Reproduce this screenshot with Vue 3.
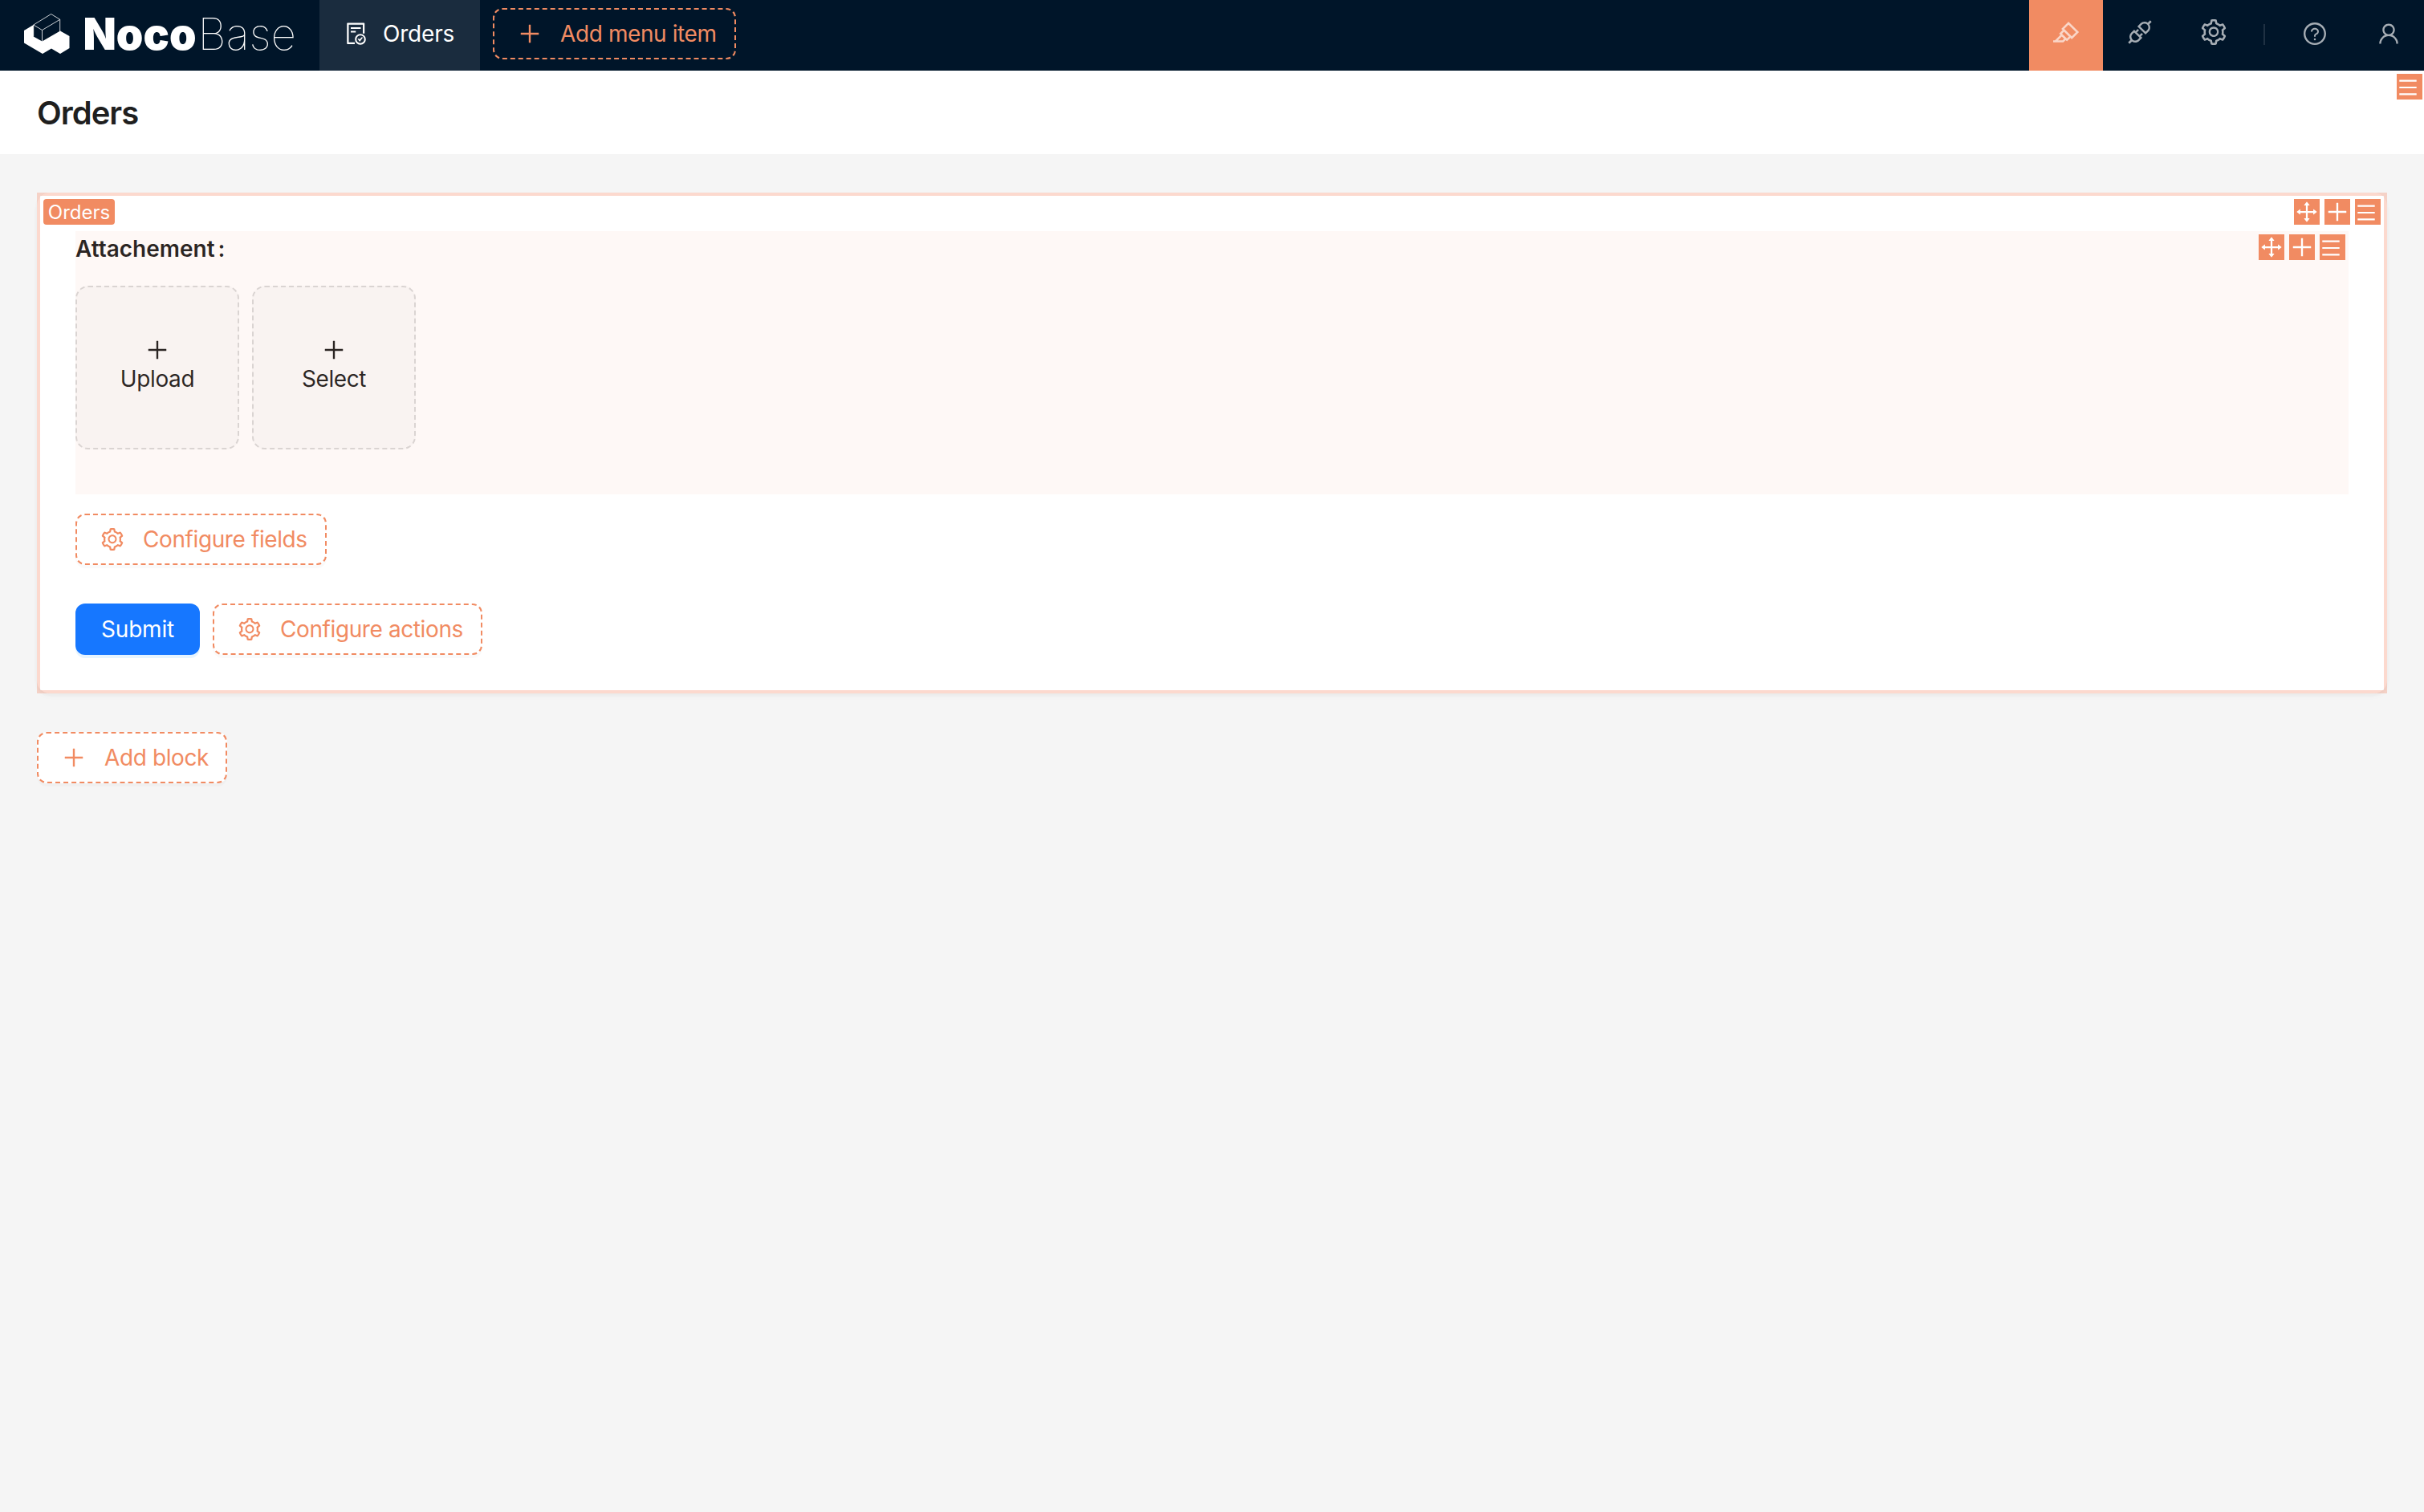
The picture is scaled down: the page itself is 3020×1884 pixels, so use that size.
<script setup>
import { h } from 'vue';

// icon paths, all drawn on the 64 64 896 896 grid
const paths = {
    plus: 'M482 152h60q8 0 8 8v704q0 8-8 8h-60q-8 0-8-8V160q0-8 8-8ZM160 474h704q8 0 8 8v60q0 8-8 8H160q-8 0-8-8v-60q0-8 8-8Z',
    menu: 'M904 160H120c-4.4 0-8 3.6-8 8v64c0 4.4 3.6 8 8 8h784c4.4 0 8-3.6 8-8v-64c0-4.4-3.6-8-8-8zm0 624H120c-4.4 0-8 3.6-8 8v64c0 4.4 3.6 8 8 8h784c4.4 0 8-3.6 8-8v-64c0-4.4-3.6-8-8-8zm0-312H120c-4.4 0-8 3.6-8 8v64c0 4.4 3.6 8 8 8h784c4.4 0 8-3.6 8-8v-64c0-4.4-3.6-8-8-8z',
    drag: 'M909.3 506.3L781.7 405.6a7.23 7.23 0 00-11.7 5.7V476H548V254h64.8c6 0 9.4-7 5.7-11.7L517.7 114.7a7.14 7.14 0 00-11.3 0L405.6 242.3a7.23 7.23 0 005.7 11.7H476v222H254v-64.8c0-6-7-9.4-11.7-5.7L114.7 506.3a7.14 7.14 0 000 11.3l127.5 100.8c4.7 3.7 11.7.4 11.7-5.7V548h222v222h-64.8c-6 0-9.4 7-5.7 11.7l100.8 127.5c2.9 3.7 8.5 3.7 11.3 0l100.8-127.5c3.7-4.7.4-11.7-5.7-11.7H548V548h222v64.8c0 6 7 9.4 11.7 5.7l127.5-100.8a7.3 7.3 0 00.1-11.4z',
    setting: 'M924.8 625.7l-65.5-56c3.1-19 4.7-38.4 4.7-57.8s-1.6-38.8-4.7-57.8l65.5-56a32.03 32.03 0 009.3-35.2l-.9-2.6a443.74 443.74 0 00-79.7-137.9l-1.8-2.1a32.12 32.12 0 00-35.1-9.5l-81.3 28.9c-30-24.6-63.5-44-99.7-57.6l-15.7-85a32.05 32.05 0 00-25.8-25.7l-2.7-.5c-52.1-9.4-106.9-9.4-159 0l-2.7.5a32.05 32.05 0 00-25.8 25.7l-15.8 85.4a351.86 351.86 0 00-99 57.4l-81.9-29.1a32 32 0 00-35.1 9.5l-1.8 2.1a446.02 446.02 0 00-79.7 137.9l-.9 2.6c-4.5 12.5-.8 26.5 9.3 35.2l66.3 56.6c-3.1 18.8-4.6 38-4.6 57.1 0 19.2 1.5 38.4 4.6 57.1L99 625.5a32.03 32.03 0 00-9.3 35.2l.9 2.6c18.1 50.4 44.9 96.9 79.7 137.9l1.8 2.1a32.12 32.12 0 0035.1 9.5l81.9-29.1c29.8 24.5 63.1 43.9 99 57.4l15.8 85.4a32.05 32.05 0 0025.8 25.7l2.7.5a449.4 449.4 0 00159 0l2.7-.5a32.05 32.05 0 0025.8-25.7l15.7-85a350 350 0 0099.7-57.6l81.3 28.9a32 32 0 0035.1-9.5l1.8-2.1c34.8-41.1 61.6-87.5 79.7-137.9l.9-2.6c4.5-12.3.8-26.3-9.3-35zM788.3 465.9c2.5 15.1 3.8 30.6 3.8 46.1s-1.3 31-3.8 46.1l-6.6 40.1 74.7 63.9a370.03 370.03 0 01-42.6 73.6L721 702.8l-31.4 25.8c-23.9 19.6-50.5 35-79.3 45.8l-38.1 14.3-17.9 97a377.5 377.5 0 01-85 0l-17.9-97.2-37.8-14.5c-28.5-10.8-55-26.2-78.7-45.7l-31.4-25.9-93.4 33.2c-17-22.9-31.2-47.6-42.6-73.6l75.5-64.5-6.5-40c-2.4-14.9-3.7-30.3-3.7-45.5 0-15.3 1.2-30.6 3.7-45.5l6.5-40-75.5-64.5c11.3-26.1 25.6-50.7 42.6-73.6l93.4 33.2 31.4-25.9c23.7-19.5 50.2-34.9 78.7-45.7l37.9-14.3 17.9-97.2c28.1-3.2 56.8-3.2 85 0l17.9 97 38.1 14.3c28.7 10.8 55.4 26.2 79.3 45.8l31.4 25.8 92.8-32.9c17 22.9 31.2 47.6 42.6 73.6L781.8 426l6.5 39.9zM512 326c-97.2 0-176 78.8-176 176s78.8 176 176 176 176-78.8 176-176-78.8-176-176-176zm79.2 255.2A111.6 111.6 0 01512 614c-29.9 0-58-11.7-79.2-32.8A111.6 111.6 0 01400 502c0-29.9 11.7-58 32.8-79.2C454 401.6 482.1 390 512 390c29.9 0 58 11.6 79.2 32.8A111.6 111.6 0 01624 502c0 29.9-11.7 58-32.8 79.2z',
    question: 'M512 64C264.600 64 64 264.600 64 512s200.600 448 448 448 448-200.600 448-448S759.400 64 512 64zm0 820c-205.400 0-372-166.600-372-372s166.600-372 372-372 372 166.600 372 372-166.600 372-372 372zM623.600 316.700C593.600 290.400 554 276 512 276s-81.600 14.500-111.600 40.700C369.200 344 352 380.700 352 420v7.600c0 4.400 3.600 8 8 8h48c4.400 0 8-3.600 8-8V420c0-44.100 43.100-80 96-80s96 35.900 96 80c0 31.100-22 59.600-56.100 72.700-21.200 8.100-39.200 22.300-52.100 40.900-13.100 19-19.900 41.800-19.900 64.900V620c0 4.400 3.600 8 8 8h48c4.400 0 8-3.600 8-8v-22.700a48.300 48.300 0 0130.900-44.800c59-22.700 97.100-74.700 97.100-132.500.1-39.300-17.100-76-48.300-103.300zM472 732a40 40 0 1080 0 40 40 0 10-80 0z',
    user: 'M858.5 763.6a374 374 0 00-80.6-119.5 375.63 375.63 0 00-119.5-80.6c-.4-.2-.8-.3-1.2-.5C719.5 518 760 444.7 760 362c0-137-111-248-248-248S264 225 264 362c0 82.7 40.5 156 102.8 201.1-.4.2-.8.3-1.2.5-44.8 18.9-85 46-119.5 80.6a375.63 375.63 0 00-80.6 119.5A371.7 371.7 0 00136 901.8a8 8 0 008 8.2h60c4.4 0 7.9-3.5 8-7.8 2-77.2 33-149.5 87.8-204.3 56.7-56.7 132-87.9 212.2-87.9s155.5 31.2 212.2 87.9C779 752.7 810 825 812 902.2c.1 4.4 3.6 7.8 8 7.8h60a8 8 0 008-8.2c-1-47.8-10.9-94.3-29.5-138.2zM512 534c-45.9 0-89.1-17.9-121.6-50.4S340 407.9 340 362c0-45.9 17.9-89.1 50.4-121.6S466.1 190 512 190s89.1 17.9 121.6 50.4S684 316.1 684 362c0 45.9-17.9 89.1-50.4 121.6S557.9 534 512 534z',
    highlight: 'M957.6 507.4L603.2 158.2a7.9 7.9 0 00-11.2 0L353.3 393.4a8.03 8.03 0 00-.1 11.3l.1.1 40 39.4-117.2 115.3a8.03 8.03 0 00-.1 11.3l.1.1 39.5 38.9-189.1 187H72.1c-4.4 0-8.1 3.6-8.1 8V860c0 4.4 3.6 8 8 8h344.9c2.1 0 4.1-.8 5.6-2.3l76.1-75.6 40.4 39.8a7.9 7.9 0 0011.2 0l117.1-115.6 40.1 39.5a7.9 7.9 0 0011.2 0l238.7-235.2c3.4-3 3.4-8 .3-11.2zM389.8 796.2H229.6l134.4-133 80.1 78.9-54.3 54.1zm154.8-62.1L373.2 565.2l68.6-67.6 171.4 168.9-68.6 67.6zM713.1 658L450.3 399.1 597.6 254l262.8 259-147.3 145z',
    api: 'M917.7 148.8l-42.4-42.4c-1.6-1.6-3.6-2.3-5.7-2.3s-4.1.8-5.7 2.3l-76.1 76.1a199.27 199.27 0 00-112.1-34.3c-51.2 0-102.4 19.5-141.5 58.6L432.3 308.7a8.03 8.03 0 000 11.3L704 591.7c1.6 1.6 3.6 2.3 5.7 2.3 2 0 4.1-.8 5.7-2.3l101.9-101.9c68.9-69 77-175.7 24.3-253.5l76.1-76.1c3.1-3.2 3.1-8.3 0-11.4zM769.1 441.7l-59.4 59.4-186.8-186.8 59.4-59.4c24.9-24.9 58.1-38.7 93.4-38.7 35.3 0 68.4 13.7 93.4 38.7 24.9 24.9 38.7 58.1 38.7 93.4 0 35.3-13.8 68.4-38.7 93.4zm-190.2 105a8.03 8.03 0 00-11.3 0L501 613.3 410.7 523l66.7-66.7c3.1-3.1 3.1-8.2 0-11.3L441 408.6a8.03 8.03 0 00-11.3 0L363 475.3l-43-43a7.85 7.85 0 00-5.7-2.3c-2 0-4.1.8-5.7 2.3L206.8 534.2c-68.9 69-77 175.7-24.3 253.5l-76.1 76.1a8.03 8.03 0 000 11.3l42.4 42.4c1.6 1.6 3.6 2.3 5.7 2.3s4.1-.8 5.7-2.3l76.1-76.1c33.7 22.9 72.9 34.3 112.1 34.3 51.2 0 102.4-19.5 141.5-58.6l101.9-101.9c3.1-3.1 3.1-8.2 0-11.3l-43-43 66.7-66.7c3.1-3.1 3.1-8.2 0-11.3l-36.6-36.2zM441.7 769.1a131.32 131.32 0 01-93.4 38.7c-35.3 0-68.4-13.7-93.4-38.7a131.32 131.32 0 01-38.7-93.4c0-35.3 13.7-68.4 38.7-93.4l59.4-59.4 186.8 186.8-59.4 59.4z',
    fileDone: 'M688 312v-48c0-4.4-3.6-8-8-8H296c-4.4 0-8 3.6-8 8v48c0 4.4 3.6 8 8 8h384c4.4 0 8-3.6 8-8zm-392 88c-4.4 0-8 3.6-8 8v48c0 4.4 3.6 8 8 8h184c4.4 0 8-3.6 8-8v-48c0-4.4-3.6-8-8-8H296zm376 116c-119.3 0-216 96.7-216 216s96.7 216 216 216 216-96.7 216-216-96.7-216-216-216zm107.5 323.5C750.8 868.2 712.6 884 672 884s-78.8-15.8-107.5-44.5C535.8 810.8 520 772.6 520 732s15.8-78.8 44.5-107.5C593.2 595.8 631.4 580 672 580s78.8 15.8 107.5 44.5C808.2 653.2 824 691.4 824 732s-15.8 78.8-44.5 107.5zM761 656h-44.3c-2.6 0-5 1.2-6.5 3.3l-63.5 87.8-23.1-31.9a7.92 7.92 0 00-6.5-3.3H573c-6.500 0-10.300 7.400-6.500 12.700l73.800 102.100c3.200 4.400 9.700 4.400 12.900 0l114.200-158c3.900-5.300.1-12.700-6.400-12.700zM440 852H208V148h560v344c0 4.400 3.600 8 8 8h56c4.400 0 8-3.600 8-8V108c0-17.700-14.300-32-32-32H168c-17.700 0-32 14.300-32 32v784c0 17.700 14.300 32 32 32h272c4.400 0 8-3.600 8-8v-56c0-4.400-3.600-8-8-8z',
};

const Icon = (props) =>
    h('svg', { viewBox: '64 64 896 896', fill: 'currentColor', 'aria-hidden': 'true' }, [
        h('path', { d: paths[props.name] }),
    ]);
Icon.props = ['name'];

const tools = ['drag', 'plus', 'menu'];
const uploads = ['Upload', 'Select'];
</script>

<template>
    <div class="page">
        <header class="header">
            <svg class="logo" viewBox="0 0 398 88">
                <path class="mark" d="M30 38L41.700 31V45.500L52.500 51.500L75 38.500L86.500 45V60L75 67L64 60.500L53 67L30 53.500Z" />
                <path class="mark-line" d="M41.700 31L63.700 17.500L74.700 24.300V39M41.700 31L52.500 37.500L74.700 24.300M52.500 37.500V51.500M41.700 31V45.500" />
                <text class="noco" x="103.500" y="61.700" textLength="141" lengthAdjust="spacingAndGlyphs">Noco</text>
                <text class="base" x="246.500" y="61.700" textLength="122.500" lengthAdjust="spacingAndGlyphs">Base</text>
            </svg>
            <div class="menu-item">
                <Icon name="fileDone" class="icon" />
                <span class="menu-label">Orders</span>
            </div>
            <button class="btn dashed add-menu">
                <Icon name="plus" class="icon" />
                <span class="label">Add menu item</span>
            </button>
            <div class="actions">
                <div class="action active"><Icon name="highlight" class="icon-lg" /></div>
                <div class="action"><Icon name="api" class="icon-lg" /></div>
                <div class="action"><Icon name="setting" class="icon-lg" /></div>
                <div class="divider"></div>
                <div class="action help"><Icon name="question" class="icon" /></div>
                <div class="action user"><Icon name="user" class="icon" /></div>
            </div>
        </header>

        <div class="title-bar">
            <h1 class="title">Orders</h1>
            <div class="tools page-tools">
                <span class="tool tool-menu"><Icon name="menu" /></span>
            </div>
        </div>

        <main class="content">
            <section class="card">
                <div class="field">
                    <div class="field-label">Attachement<span class="colon">:</span></div>
                    <div class="upload-list">
                        <div v-for="item in uploads" :key="item" class="upload">
                            <Icon name="plus" class="icon" />
                            <span class="upload-text">{{ item }}</span>
                        </div>
                    </div>
                    <div class="field-mask">
                        <div class="tools field-tools">
                            <span v-for="t in tools" :key="t" class="tool" :class="'tool-' + t"><Icon :name="t" /></span>
                        </div>
                    </div>
                </div>
                <button class="btn dashed configure-fields">
                    <Icon name="setting" class="icon" />
                    <span class="label">Configure fields</span>
                </button>
                <div class="row">
                    <button class="btn primary">Submit</button>
                    <button class="btn dashed configure-actions">
                        <Icon name="setting" class="icon" />
                        <span class="label">Configure actions</span>
                    </button>
                </div>
                <div class="card-mask">
                    <span class="badge">Orders</span>
                    <div class="tools card-tools">
                        <span v-for="t in tools" :key="t" class="tool" :class="'tool-' + t"><Icon :name="t" /></span>
                    </div>
                </div>
            </section>
            <button class="btn dashed add-block">
                <Icon name="plus" class="icon" />
                <span class="label">Add block</span>
            </button>
        </main>
    </div>
</template>

<style>
body{
    margin: 0;
    background: #f5f5f5;
}
</style>

<style scoped>
.page{
    min-height: 1884px;
    background: #f5f5f5;
    color: rgba(0, 0, 0, 0.88);
    font-family: Inter, "Liberation Sans", sans-serif;
    font-size: 28px;
    line-height: 44px;
}
.page *{
    box-sizing: border-box;
}
svg{
    display: block;
    flex: none;
}
.icon{
    width: 28px;
    height: 28px;
}
.icon-lg{
    width: 32px;
    height: 32px;
}

/* header */
.header{
    display: flex;
    height: 88px;
    background: #001529;
}
.logo{
    width: 398px;
    height: 88px;
}
.mark{
    fill: #fff;
}
.mark-line{
    fill: none;
    stroke: #fff;
    stroke-width: 0.8;
}
.noco{
    fill: #fff;
    font-size: 54.5px;
    font-weight: 900;
}
.base{
    fill: #fff;
    font-size: 54.5px;
    font-weight: 100;
}
.menu-item{
    display: flex;
    align-items: center;
    width: 200px;
    height: 88px;
    padding: 0 0 4px 32px;
    background: #1a2c3e;
    color: #fff;
}
.menu-label{
    margin-left: 19px;
    letter-spacing: -0.2px;
}

/* buttons */
.btn{
    display: flex;
    align-items: center;
    flex: none;
    height: 64px;
    margin: 0;
    padding: 0 0 0 30px;
    border-radius: 12px;
    font: inherit;
    white-space: nowrap;
}
.dashed{
    border: 2px dashed #f18b62;
    background: #fff;
    color: #f18b62;
    box-shadow: 0 4px 0 rgba(0, 0, 0, 0.02);
}
.label{
    margin-left: 24px;
    letter-spacing: -0.4px;
}
.primary{
    justify-content: center;
    width: 155px;
    padding: 0;
    border: none;
    background: #1677ff;
    color: #fff;
    letter-spacing: -0.2px;
    box-shadow: 0 4px 0 rgba(5, 145, 255, 0.1);
}
.add-menu{
    width: 303px;
    margin: 10px 0 0 16px;
    background: transparent;
    box-shadow: none;
}
.configure-fields{
    width: 313px;
}
.configure-actions{
    width: 336px;
}
.add-block{
    width: 237px;
}

.actions{
    display: flex;
    margin-left: auto;
    color: rgba(255, 255, 255, 0.65);
}
.action{
    display: flex;
    justify-content: center;
    align-items: center;
    width: 92px;
    height: 88px;
    padding-bottom: 8px;
}
.active{
    background: #f18b62;
}
.help, .user{
    padding-bottom: 4px;
}
.help{
    margin-left: 16px;
}
.user{
    width: 90px;
    padding-left: 2px;
}
.divider{
    width: 2px;
    height: 26px;
    margin: 30px 0 0 16px;
    background: rgba(253, 253, 253, 0.12);
}

/* title */
.title-bar{
    position: relative;
    height: 104px;
    padding: 33px 46px 0;
    background: #fff;
}
.title{
    margin: 0;
    font-size: 40px;
    font-weight: 600;
    line-height: 40px;
    letter-spacing: -1px;
}

/* settings handles over blocks and fields */
.tools{
    display: flex;
    gap: 6px;
    position: absolute;
}
.page-tools{
    top: 4px;
    right: 2px;
}
.tool{
    display: flex;
    justify-content: center;
    align-items: center;
    width: 32px;
    height: 32px;
    background: #f18b62;
    color: #fff;
}
.tool svg{
    width: 28px;
    height: 28px;
}
.tool-menu{
    padding: 2px 4px 0 0;
}
.tool-menu svg{
    width: 24px;
    height: 24px;
}

/* blocks */
.content{
    padding: 48px 46px;
}
.card{
    position: relative;
    height: 624px;
    margin-bottom: 48px;
    padding: 48px;
    border-radius: 16px;
    background: #fff;
    box-shadow: 0 2px 4px 0 rgba(0, 0, 0, 0.03), 0 2px 12px -2px rgba(0, 0, 0, 0.02), 0 4px 8px 0 rgba(0, 0, 0, 0.02);
}
.card-mask{
    position: absolute;
    inset: 0;
    border: 4px solid rgba(246, 130, 94, 0.3);
}
.badge{
    position: absolute;
    top: 4px;
    left: 4px;
    width: 89px;
    height: 32px;
    border-radius: 4px;
    background: #f18b62;
    color: #fff;
    font-size: 24px;
    line-height: 33px;
    text-align: center;
}
.card-tools{
    top: 4px;
    right: 4px;
}
.field{
    position: relative;
    height: 328px;
    margin-bottom: 24px;
}
.field-mask{
    position: absolute;
    inset: 0;
    background: rgba(241, 139, 98, 0.06);
}
.field-tools{
    top: 4px;
    right: 4px;
}
.field-label{
    height: 68px;
    font-weight: 600;
    letter-spacing: 0;
}
.colon{
    margin-left: 4px;
}
.upload-list{
    display: flex;
    gap: 16px;
}
.upload{
    display: flex;
    flex-direction: column;
    justify-content: center;
    align-items: center;
    width: 204px;
    height: 204px;
    border: 2px dashed #d9d9d9;
    border-radius: 16px;
    background: rgba(0, 0, 0, 0.02);
}
.upload-text{
    letter-spacing: -0.4px;
}
.row{
    display: flex;
    gap: 16px;
    margin-top: 48px;
}
</style>
